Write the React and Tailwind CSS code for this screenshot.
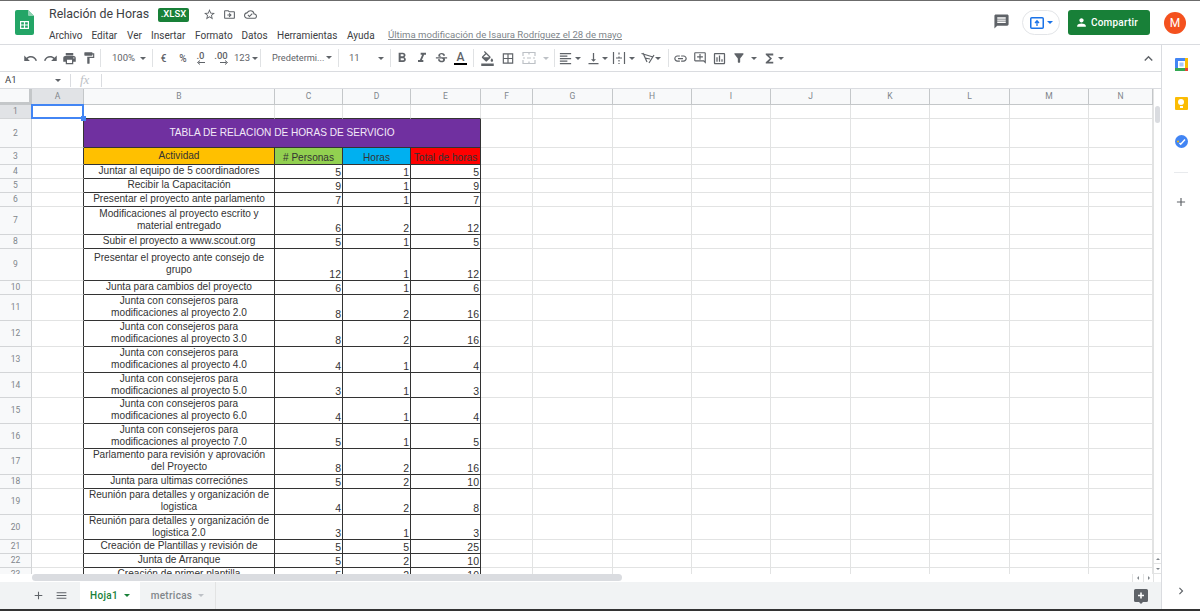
import {
  MdUndo, MdRedo, MdPrint, MdFormatPaint, MdFormatBold, MdFormatItalic, MdStrikethroughS,
  MdFormatColorFill, MdBorderAll, MdFormatAlignLeft, MdVerticalAlignBottom, MdLink,
  MdOutlineAddComment, MdOutlineInsertChart, MdFilterAlt, MdFunctions, MdKeyboardArrowUp,
  MdComment, MdStarBorder, MdOutlineDriveFileMove, MdOutlineCloudDone, MdPerson, MdAdd,
  MdMenu, MdChevronRight,
} from 'react-icons/md'

const columns = ['A', 'B', 'C', 'D', 'E', 'F', 'G', 'H', 'I', 'J', 'K', 'L', 'M', 'N']
const emptyColumns = ['F', 'G', 'H', 'I', 'J', 'K', 'L', 'M', 'N']

const activities = [
  ['Juntar al equipo de 5 coordinadores', 5, 1, 5],
  ['Recibir la Capacitación', 9, 1, 9],
  ['Presentar el proyecto ante parlamento', 7, 1, 7],
  ['Modificaciones al proyecto escrito y\nmaterial entregado', 6, 2, 12],
  ['Subir el proyecto a www.scout.org', 5, 1, 5],
  ['Presentar el proyecto ante consejo de\ngrupo', 12, 1, 12],
  ['Junta para cambios del proyecto', 6, 1, 6],
  ['Junta con consejeros para\nmodificaciones al proyecto 2.0', 8, 2, 16],
  ['Junta con consejeros para\nmodificaciones al proyecto 3.0', 8, 2, 16],
  ['Junta con consejeros para\nmodificaciones al proyecto 4.0', 4, 1, 4],
  ['Junta con consejeros para\nmodificaciones al proyecto 5.0', 3, 1, 3],
  ['Junta con consejeros para\nmodificaciones al proyecto 6.0', 4, 1, 4],
  ['Junta con consejeros para\nmodificaciones al proyecto 7.0', 5, 1, 5],
  ['Parlamento para revisión y aprovación\ndel Proyecto', 8, 2, 16],
  ['Junta para ultimas correciónes', 5, 2, 10],
  ['Reunión para detalles y organización de\nlogistica', 4, 2, 8],
  ['Reunión para detalles y organización de\nlogistica 2.0', 3, 1, 3],
  ['Creación de Plantillas y revisión de', 5, 5, 25],
  ['Junta de Arranque', 5, 2, 10],
  ['Creación de primer plantilla', 5, 2, 10],
]

function Caret({ light }) {
  return (
    <span className={`inline-block w-0 h-0 shrink-0 border-x-[3px] border-x-transparent border-t-[3px] ${light ? 'border-t-[#bdc1c6]' : 'border-t-[#5f6368]'}`} />
  )
}

function Sep() {
  return <span className="w-px h-[18px] bg-[#e0e2e4] shrink-0" />
}

function Tool({ className, children }) {
  return <span className={`flex items-center justify-center shrink-0 text-[#5f6368] ${className}`}>{children}</span>
}

function SheetsLogo() {
  return (
    <svg width="19" height="25" viewBox="0 0 19 25" className="shrink-0">
      <path d="M2 0h11l6 6v17a2 2 0 0 1-2 2H2a2 2 0 0 1-2-2V2a2 2 0 0 1 2-2z" fill="#23a566" />
      <path d="M13 0l6 6h-5a1 1 0 0 1-1-1z" fill="#8ed1b1" />
      <path d="M5 11h9v8H5z M6.200 12.200v2.200h2.700v-2.200z M10.100 12.200v2.200h2.700v-2.200z M6.200 15.600v2.200h2.700v-2.200z M10.100 15.600v2.200h2.700v-2.200z" fill="#fff" fillRule="evenodd" />
    </svg>
  )
}

function TitleBar() {
  return (
    <header className="h-[44px] shrink-0 border-b border-[#dadce0] flex font-['Roboto',sans-serif]">
      <div className="w-[49px] shrink-0 pl-[15px] pt-[9px]">
        <SheetsLogo />
      </div>
      <div className="flex-1 min-w-0">
        <div className="h-[27px] flex items-center">
          <span className="text-[12.400px] text-[#3c4043] w-[109px] whitespace-nowrap">Relación de Horas</span>
          <span className="w-[31px] h-[14px] rounded-[2px] bg-[#188038] text-white text-[9.500px] font-medium flex items-center justify-center">.XLSX</span>
          <MdStarBorder className="ml-[14px] text-[#5f6368]" size={13} />
          <MdOutlineDriveFileMove className="ml-[7px] text-[#5f6368]" size={13} />
          <MdOutlineCloudDone className="ml-[8px] text-[#5f6368]" size={13} />
        </div>
        <div className="flex items-center h-[14px] text-[10px] text-[#3c4043]">
          <span className="w-[42.500px]">Archivo</span>
          <span className="w-[35.500px]">Editar</span>
          <span className="w-[24px]">Ver</span>
          <span className="w-[44px]">Insertar</span>
          <span className="w-[46.500px]">Formato</span>
          <span className="w-[35.500px]">Datos</span>
          <span className="w-[70px]">Herramientas</span>
          <span className="w-[41px]">Ayuda</span>
          <span className="text-[9.600px] text-[#80868b] underline">Última modificación de Isaura Rodríguez el 28 de mayo</span>
        </div>
      </div>
      <div className="flex items-center pr-[14px]">
        <MdComment className="text-[#5f6368] -scale-x-100 -mt-[2px]" size={17} />
        <div className="ml-[12px] w-[38px] h-[25px] rounded-full border border-[#e3e5e8] flex items-center justify-center gap-[3px]">
          <svg width="14" height="12" viewBox="0 0 14 12" fill="none">
            <rect x="0.750" y="0.750" width="12.500" height="10.500" rx="1" stroke="#1a73e8" strokeWidth="1.500" />
            <path d="M7 9V4.500M5 6l2-2.200L9 6" stroke="#1a73e8" strokeWidth="1.300" />
          </svg>
          <span className="w-0 h-0 border-x-[3px] border-x-transparent border-t-[3px] border-t-[#1a73e8]" />
        </div>
        <div className="ml-[8px] w-[82px] h-[25px] rounded-[3px] bg-[#188038] text-white flex items-center pl-[7px] gap-[3px] text-[10px] font-medium tracking-[0.2px]">
          <MdPerson size={13} />
          Compartir
        </div>
        <div className="ml-[14px] w-[22px] h-[22px] rounded-full bg-[#f4511e] text-white text-[12px] flex items-center justify-center">M</div>
      </div>
    </header>
  )
}

function MergeIcon() {
  return (
    <svg width="14" height="14" viewBox="0 0 14 14" fill="none" stroke="#bdc1c6" strokeWidth="1.200">
      <path d="M1 5V1.500h12V5 M1 9v3.500h12V9 M1 7h2 M5 7h4 M11 7h2 M7 1.500v2 M7 10.500v2" />
    </svg>
  )
}

function WrapIcon() {
  return (
    <svg width="14" height="14" viewBox="0 0 14 14" fill="none" stroke="#5f6368" strokeWidth="1.200">
      <path d="M1.500 1v12 M12.500 1v12 M4 7h6 M7 1.500v2 M7 5.500V7 M7 9v1.500 M7 12v1" />
    </svg>
  )
}

function RotateIcon() {
  return (
    <svg width="15" height="14" viewBox="0 0 15 14" fill="none" stroke="#5f6368" strokeWidth="1.200">
      <path d="M1.500 2.500L13 6 M3 2l4 9 M9 12l5-8 M5 7l5 1" />
    </svg>
  )
}

function DecimalIcon({ text, flip }) {
  return (
    <span className="relative text-[9.500px] font-medium text-[#5f6368] leading-none pb-[4px]">
      {text}
      <svg width="8" height="5" viewBox="0 0 8 5" className={`absolute right-0 bottom-0 ${flip ? '-scale-x-100' : ''}`}>
        <path d="M0 2.500h6.500M5 .500l2.500 2-2.500 2" fill="none" stroke="#5f6368" strokeWidth="1" />
      </svg>
    </span>
  )
}

function Toolbar() {
  return (
    <div className="h-[27px] shrink-0 border-b border-[#dadce0] flex items-center pl-[20px] font-['Roboto',sans-serif] text-[9.500px] text-[#5f6368]">
      <Tool className="w-[20px]"><MdUndo size={15} /></Tool>
      <Tool className="w-[20px]"><MdRedo size={15} /></Tool>
      <Tool className="w-[19px]"><MdPrint size={15} /></Tool>
      <Tool className="w-[21px] pr-[2px]"><MdFormatPaint size={14} /></Tool>
      <Sep />
      <span className="w-[51px] shrink-0 pl-[11px] pr-[6px] flex items-center justify-between">100%<Caret /></span>
      <Sep />
      <Tool className="w-[21px] text-[10px] font-medium">€</Tool>
      <Tool className="w-[18px] text-[10px] font-medium">%</Tool>
      <Tool className="w-[17px]"><DecimalIcon text=".0" flip /></Tool>
      <Tool className="w-[24px]"><DecimalIcon text=".00" /></Tool>
      <span className="w-[27px] shrink-0 pl-[1px] flex items-center gap-[2px]">123<Caret /></span>
      <Sep />
      <span className="w-[77px] shrink-0 pl-[11px] pr-[6px] flex items-center justify-between text-[9.200px]">Predetermi...<Caret /></span>
      <Sep />
      <span className="w-[51px] shrink-0 pl-[10px] pr-[6px] flex items-center justify-between">11<Caret /></span>
      <Sep />
      <Tool className="w-[21px]"><MdFormatBold size={16} /></Tool>
      <Tool className="w-[19px]"><MdFormatItalic size={16} /></Tool>
      <Tool className="w-[20px]"><MdStrikethroughS size={15} /></Tool>
      <Tool className="w-[19px] flex-col">
        <span className="text-[12px] leading-[12px] font-medium">A</span>
        <span className="w-[13px] h-[2.500px] bg-black" />
      </Tool>
      <span className="w-[3px] shrink-0" />
      <Sep />
      <Tool className="w-[27px]"><MdFormatColorFill size={15} /></Tool>
      <Tool className="w-[14px]"><MdBorderAll size={15} /></Tool>
      <Tool className="w-[28px]"><MergeIcon /></Tool>
      <Tool className="w-[9px] justify-start"><Caret light /></Tool>
      <span className="w-[2px] shrink-0" />
      <Sep />
      <Tool className="w-[20px]"><MdFormatAlignLeft size={15} /></Tool>
      <Tool className="w-[6px]"><Caret /></Tool>
      <Tool className="w-[20px] ml-[2px]"><MdVerticalAlignBottom size={15} /></Tool>
      <Tool className="w-[4px]"><Caret /></Tool>
      <Tool className="w-[24px]"><WrapIcon /></Tool>
      <Tool className="w-[2px]"><Caret /></Tool>
      <Tool className="w-[22px] justify-end"><RotateIcon /></Tool>
      <Tool className="w-[6px]"><Caret /></Tool>
      <span className="w-[7px] shrink-0" />
      <Sep />
      <Tool className="w-[22px]"><MdLink size={15} /></Tool>
      <Tool className="w-[18px]"><MdOutlineAddComment size={14} /></Tool>
      <Tool className="w-[20px]"><MdOutlineInsertChart size={15} /></Tool>
      <Tool className="w-[20px]"><MdFilterAlt size={14} /></Tool>
      <Tool className="w-[10px]"><Caret /></Tool>
      <Tool className="w-[20px]"><MdFunctions size={15} /></Tool>
      <Tool className="w-[4px]"><Caret /></Tool>
      <div className="flex-1" />
      <Tool className="w-[20px] mr-[3px]"><MdKeyboardArrowUp size={17} /></Tool>
    </div>
  )
}

function FormulaBar() {
  return (
    <div className="h-[17px] shrink-0 border-b border-[#dadce0] flex items-center font-['Roboto',sans-serif]">
      <span className="w-[64px] pl-[5px] pr-[3px] flex items-center justify-between text-[9.500px] text-[#3c4043]">A1<Caret /></span>
      <span className="w-px h-[13px] bg-[#dadce0] ml-[6px]" />
      <span className="ml-[9px] w-[21px] text-[13px] italic text-[#bdc1c6] font-['Liberation_Serif',serif]">fx</span>
      <span className="w-px h-[13px] bg-[#dadce0]" />
    </div>
  )
}

function HeaderCell({ selected, children }) {
  return (
    <div className={`flex items-center justify-center border-r border-b border-[#c4c7c9] text-[8.500px] text-[#80868b] font-['Roboto',sans-serif] ${selected ? 'bg-[#e1e3e6]' : 'bg-[#f8f9fa]'}`}>
      {children}
    </div>
  )
}

function RowNumber({ selected, children }) {
  return (
    <div className={`flex items-center justify-center border-r border-b border-[#d3d5d7] text-[8.500px] text-[#80868b] font-['Roboto',sans-serif] ${selected ? 'bg-[#e1e3e6]' : 'bg-[#f8f9fa]'}`}>
      {children}
    </div>
  )
}

function Blank({ dark }) {
  return <div className={`border-r border-b border-[#e2e3e3] ${dark ? 'border-b-[#333]' : ''}`} />
}

function BlankA() {
  return <div className="border-r border-b border-[#e2e3e3] border-r-[#333]" />
}

function ValueCell({ value }) {
  return (
    <div className="border-r border-b border-[#333] overflow-hidden flex items-end justify-end pr-px text-[10.500px] leading-[12px] text-[#333]">
      {value}
    </div>
  )
}

function ActivityCell({ text }) {
  return (
    <div className="border-r border-b border-[#333] overflow-hidden flex items-center justify-center text-center whitespace-pre-line pb-px text-[10.100px] leading-[12px] text-[#333]">
      {text}
    </div>
  )
}

function Sheet() {
  return (
    <div className="h-[485px] overflow-hidden shrink-0">
      <div className="grid grid-cols-[32px_52px_191px_68px_68px_70px_52px_80px_79px_79px_80px_79px_80px_79px_64px] grid-rows-[16px_14px_29px_17px_14px_14px_14px_28px_14px_32px_14px_26px_26px_26px_25px_26px_25px_26px_14px_26px_25px_14px_14px_14px] font-['Liberation_Sans',Arial,sans-serif]">
        <div className="bg-[#f8f9fa] border-r-[3px] border-b-[3px] border-[#c4c7c9]" />
        {columns.map((c) => (
          <HeaderCell key={c} selected={c === 'A'}>{c}</HeaderCell>
        ))}

        {/* row 1 */}
        <RowNumber selected>1</RowNumber>
        <div className="relative border-r border-b border-[#e2e3e3]">
          <div className="absolute -inset-px border-2 border-[#4285f4]" />
          <div className="absolute -right-[3px] -bottom-[3px] w-[5px] h-[5px] bg-[#4285f4] z-10" />
        </div>
        <Blank dark />
        <Blank dark />
        <Blank dark />
        <Blank dark />
        {emptyColumns.map((c) => <Blank key={c} />)}

        {/* row 2 */}
        <RowNumber>2</RowNumber>
        <BlankA />
        <div className="col-span-4 bg-[#7030a0] border-r border-b border-[#333] flex items-center justify-center text-[#f3e9f8] text-[10.100px]">
          TABLA DE RELACION DE HORAS DE SERVICIO
        </div>
        {emptyColumns.map((c) => <Blank key={c} />)}

        {/* row 3 */}
        <RowNumber>3</RowNumber>
        <BlankA />
        <div className="bg-[#ffc000] border-r border-b border-[#333] flex items-center justify-center text-[10.100px] leading-[12px] text-[#333] pb-[1px]">Actividad</div>
        <div className="bg-[#92d050] border-r border-b border-[#333] flex items-end justify-center text-[10.100px] leading-[12px] text-[#333]"># Personas</div>
        <div className="bg-[#00b0f0] border-r border-b border-[#333] flex items-end justify-center text-[10.100px] leading-[12px] text-[#333]">Horas</div>
        <div className="bg-[#ff0000] border-r border-b border-[#333] flex items-end justify-center text-[10.100px] leading-[12px] text-[#333] whitespace-nowrap">Total de horas</div>
        {emptyColumns.map((c) => <Blank key={c} />)}

        {activities.map((row, i) => (
          <div key={i} className="contents">
            <RowNumber>{i + 4}</RowNumber>
            <BlankA />
            <ActivityCell text={row[0]} />
            <ValueCell value={row[1]} />
            <ValueCell value={row[2]} />
            <ValueCell value={row[3]} />
            {emptyColumns.map((c) => <Blank key={c} />)}
          </div>
        ))}
      </div>
    </div>
  )
}

function VerticalScrollbar() {
  return (
    <div className="w-[8px] shrink-0 border-l border-[#e2e3e3] flex flex-col">
      <div className="h-[17px] shrink-0" />
      <div className="h-[17px] w-[5px] ml-px bg-[#dadce0] rounded-sm shrink-0" />
      <div className="flex-1" />
      <div className="h-[11px] shrink-0 border-y border-[#e2e3e3] flex items-center justify-center">
        <span className="w-0 h-0 border-x-[2px] border-x-transparent border-b-[2px] border-b-[#80868b]" />
      </div>
      <div className="h-[10px] shrink-0 border-b border-[#e2e3e3] flex items-center justify-center">
        <span className="w-0 h-0 border-x-[2px] border-x-transparent border-t-[2px] border-t-[#80868b]" />
      </div>
    </div>
  )
}

function HorizontalScrollbar() {
  return (
    <div className="h-[8px] shrink-0 flex pl-[32px]">
      <div className="w-[590px] h-[7px] rounded-sm bg-[#dadce0]" />
      <div className="flex-1" />
      <div className="w-[11px] border-l border-[#e2e3e3] flex items-center justify-center">
        <span className="w-0 h-0 border-y-[2px] border-y-transparent border-r-[2px] border-r-[#80868b]" />
      </div>
      <div className="w-[10px] border-l border-[#e2e3e3] flex items-center justify-center">
        <span className="w-0 h-0 border-y-[2px] border-y-transparent border-l-[2px] border-l-[#80868b]" />
      </div>
      <div className="w-[8px] border-l border-[#e2e3e3]" />
    </div>
  )
}

function SheetTabs() {
  return (
    <div className="h-[27px] shrink-0 bg-[#f1f3f4] flex items-center font-['Roboto',sans-serif] text-[10px] font-medium">
      <div className="w-[80px] shrink-0 flex items-center pl-[32px] gap-[10px] text-[#5f6368]">
        <MdAdd size={13} />
        <MdMenu size={13} />
      </div>
      <div className="w-[60px] h-full shrink-0 bg-white flex items-center justify-center gap-[6px] text-[#188038] tracking-[0.3px]">
        Hoja1
        <span className="w-0 h-0 border-x-[3px] border-x-transparent border-t-[3px] border-t-[#188038]" />
      </div>
      <div className="w-[76px] h-full shrink-0 border-r border-[#e2e3e3] flex items-center justify-center gap-[6px] text-[#80868b] tracking-[0.3px]">
        metricas
        <Caret light />
      </div>
      <div className="flex-1" />
      <svg width="14" height="15" viewBox="0 0 14 15" className="mr-[13px] mt-[1px] shrink-0">
        <path d="M1.500 0h11A1.500 1.500 0 0 1 14 1.500v10a1.500 1.500 0 0 1-1.500 1.500H9l-2 2-2-2H1.500A1.500 1.500 0 0 1 0 11.500v-10A1.500 1.500 0 0 1 1.500 0z" fill="#5f6368" />
        <path d="M7 3.500v6M4 6.500h6" stroke="#fff" strokeWidth="1.600" />
      </svg>
    </div>
  )
}

function SidePanel() {
  return (
    <aside className="w-[39px] shrink-0 border-l border-[#dadce0] flex flex-col items-center">
      <svg width="13" height="13" viewBox="0 0 13 13" className="mt-[13px] shrink-0">
        <rect width="13" height="13" rx="1" fill="#4285f4" />
        <rect x="10" width="3" height="13" fill="#fbbc04" />
        <rect y="10" width="13" height="3" fill="#34a853" />
        <rect x="3" y="3" width="7" height="7" fill="#fff" />
        <rect x="10" y="10" width="3" height="3" fill="#ea4335" />
        <rect x="4.500" y="4.500" width="4" height="4" fill="#a8c7fa" />
      </svg>
      <span className="mt-[26px] w-[13px] h-[13px] rounded-[1px] bg-[#fbbc04] flex flex-col items-center justify-center shrink-0">
        <span className="w-[6px] h-[6px] rounded-full bg-white" />
        <span className="w-[3px] h-[2px] mt-px bg-white" />
      </span>
      <svg width="13" height="13" viewBox="0 0 13 13" className="mt-[25px] shrink-0">
        <circle cx="6.500" cy="6.500" r="6.500" fill="#4285f4" />
        <path d="M4.500 8l1.200 1.200L10 4.500" fill="none" stroke="#fff" strokeWidth="1.500" />
        <circle cx="3" cy="6.500" r="1" fill="#fbbc04" />
      </svg>
      <span className="mt-[24px] w-[14px] h-px bg-[#e8eaed] shrink-0" />
      <MdAdd className="mt-[22px] text-[#5f6368] shrink-0" size={14} />
      <div className="flex-1" />
      <MdChevronRight className="mb-[11px] text-[#5f6368] shrink-0" size={14} />
    </aside>
  )
}

export default function App() {
  return (
    <div className="w-[1200px] h-[611px] overflow-hidden bg-white flex flex-col">
      <div className="h-px shrink-0 bg-[#6b6b6b]" />
      <TitleBar />
      <div className="flex flex-1 min-h-0">
        <div className="w-[1161px] shrink-0 flex flex-col">
          <Toolbar />
          <FormulaBar />
          <div className="flex shrink-0">
            <Sheet />
            <VerticalScrollbar />
          </div>
          <HorizontalScrollbar />
          <SheetTabs />
        </div>
        <SidePanel />
      </div>
      <div className="h-[2px] shrink-0 bg-[#333]" />
    </div>
  )
}
